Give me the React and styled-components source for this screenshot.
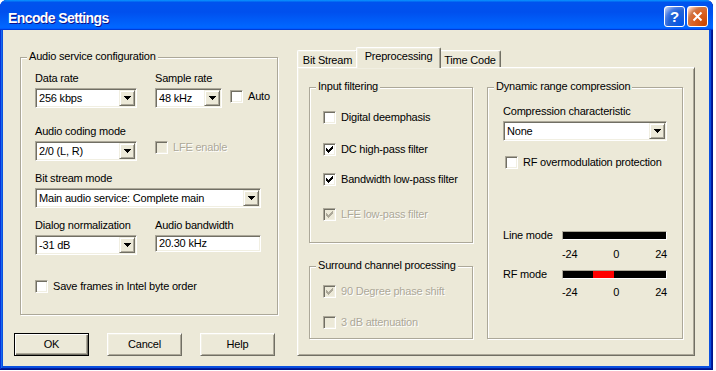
import React from "react";
import styled, { createGlobalStyle } from "styled-components";

const GlobalStyle = createGlobalStyle`
  html, body {
    margin: 0;
    padding: 0;
    background: #ffffff;
  }
  body {
    font-family: "Liberation Sans", Arial, sans-serif;
    font-size: 11px;
    letter-spacing: -0.2px;
    color: #000000;
  }
  * {
    box-sizing: border-box;
  }
`;

const Window = styled.div`
  width: 713px;
  height: 370px;
  display: flex;
  flex-direction: column;
  background: #0a50e0;
  border-radius: 7px 7px 0 0;
  overflow: hidden;
  box-shadow: inset -1px -1px #00138c, inset 1px 0 #0831d9, inset -2px -2px #001ea0, inset 2px 0 #166aee;
`;

const TitleBar = styled.div`
  height: 30px;
  flex: none;
  display: flex;
  align-items: center;
  justify-content: space-between;
  padding: 3px 5px 0 8px;
  background: linear-gradient(180deg, #0997ff 0%, #0053ee 8%, #0050ee 40%, #0066ff 88%, #0066ff 93%, #005bff 95%, #003dd7 96%, #003dd7 100%);
`;

const Title = styled.div`
  font-family: "Liberation Sans", Arial, sans-serif;
  font-weight: bold;
  font-size: 14px;
  letter-spacing: -0.6px;
  color: #ffffff;
  text-shadow: 1px 1px #0f1089;
  padding-top: 2px;
`;

const CaptionButtons = styled.div`
  display: flex;
  gap: 2px;
`;

const CaptionButton = styled.div`
  width: 21px;
  height: 21px;
  border: 1px solid #ffffff;
  border-radius: 3px;
  display: flex;
  align-items: center;
  justify-content: center;
  color: #ffffff;
  font-family: "Liberation Sans", Arial, sans-serif;
  font-weight: bold;
  font-size: 15px;
  background: ${p => p.$close
    ? "radial-gradient(circle at 90% 90%, #cc4600 0%, #dc6527 55%, #cd7546 70%, #ffccb2 90%, #ffffff 100%)"
    : "radial-gradient(circle at 90% 90%, #0054e9 0%, #2263d5 55%, #4479e4 70%, #a3bbec 90%, #ffffff 100%)"};
`;

const Client = styled.div`
  flex: 1;
  margin: 0 4px 4px 3px;
  background: #ece9d8;
  display: flex;
  align-items: flex-start;
  gap: 19px;
  padding: 17px 0 0 17px;
`;

const LeftCol = styled.div`
  display: flex;
  flex-direction: column;
  padding-top: 10px;
`;

const Group = styled.div`
  position: relative;
  width: ${p => p.$w}px;
  height: ${p => p.$h}px;
  margin-top: ${p => p.$mt || 0}px;
  border: 1px solid #aca899;
  box-shadow: inset 1px 1px #ffffff, 1px 1px #ffffff;
  padding: ${p => p.$pad};
`;

const Legend = styled.div`
  position: absolute;
  top: -8px;
  left: 6px;
  padding: 0 2px;
  background: #ece9d8;
  line-height: 13px;
  white-space: nowrap;
`;

const Row = styled.div`
  display: flex;
  align-items: flex-start;
  gap: 18px;
  margin-top: ${p => p.$mt || 0}px;
`;

const Field = styled.div`
  display: flex;
  flex-direction: column;
  gap: 3px;
`;

const Label = styled.div`
  line-height: 13px;
  white-space: nowrap;
`;

const Inline = styled.div`
  display: flex;
  align-items: flex-start;
  gap: 8px;
`;

const Sunken = styled.div`
  width: ${p => p.$w}px;
  height: ${p => p.$h}px;
  display: flex;
  align-items: stretch;
  background: #ffffff;
  border: 1px solid;
  border-color: #aca899 #ffffff #ffffff #aca899;
  box-shadow: inset 1px 1px #716f64, inset -1px -1px #f1efe2;
  padding: 1px;
`;

const ComboText = styled.div`
  flex: 1;
  display: flex;
  align-items: center;
  padding-left: 2px;
  line-height: 13px;
  white-space: nowrap;
  overflow: hidden;
`;

const DropButton = styled.div`
  width: 16px;
  flex: none;
  display: flex;
  align-items: center;
  justify-content: center;
  background: #ece9d8;
  border: 1px solid;
  border-color: #f1efe2 #716f64 #716f64 #f1efe2;
  box-shadow: inset 1px 1px #ffffff, inset -1px -1px #aca899;
`;

const CheckRow = styled.div`
  display: flex;
  align-items: center;
  gap: 5px;
  line-height: 13px;
  white-space: nowrap;
  margin-top: ${p => p.$mt || 0}px;
  margin-left: ${p => p.$ml || 0}px;
  color: ${p => p.$disabled ? "#aca899" : "#000000"};
  text-shadow: ${p => p.$disabled ? "1px 1px #ffffff" : "none"};
`;

const Box = styled.span`
  width: 13px;
  height: 13px;
  flex: none;
  display: flex;
  align-items: center;
  justify-content: center;
  border: 1px solid;
  border-color: #aca899 #ffffff #ffffff #aca899;
  box-shadow: inset 1px 1px #716f64, inset -1px -1px #f1efe2;
  background: ${p => p.$disabled ? "#ece9d8" : "#ffffff"};
`;

const ButtonRow = styled.div`
  display: flex;
  gap: 18px;
  margin: 18px 0 0 -6px;
`;

const Button = styled.div`
  width: 75px;
  height: 23px;
  display: flex;
  align-items: center;
  justify-content: center;
  line-height: 13px;
  background: #ece9d8;
  border: 1px solid;
  border-color: ${p => p.$default ? "#000000" : "#ffffff #716f64 #716f64 #ffffff"};
  box-shadow: ${p => p.$default
    ? "inset 1px 1px #ffffff, inset -1px -1px #716f64, inset -2px -2px #aca899"
    : "inset 1px 1px #f1efe2, inset -1px -1px #aca899"};
`;

const TabControl = styled.div`
  display: flex;
  flex-direction: column;
  width: 398px;
`;

const TabStrip = styled.div`
  display: flex;
  align-items: flex-end;
  height: 20px;
`;

const Tab = styled.div`
  position: relative;
  z-index: ${p => p.$active ? 2 : 1};
  width: ${p => p.$w}px;
  height: ${p => p.$active ? 21 : 17}px;
  margin: 0 ${p => p.$active ? -2 : 0}px ${p => p.$active ? -1 : 0}px;
  display: flex;
  justify-content: center;
  padding-top: ${p => p.$active ? 2 : 3}px;
  line-height: 13px;
  white-space: nowrap;
  background: #ece9d8;
  border-top: 1px solid #ffffff;
  border-left: 1px solid #ffffff;
  border-right: 1px solid #716f64;
  border-radius: 2px 2px 0 0;
  box-shadow: inset -1px 0 #aca899, inset 1px 1px #f1efe2;
`;

const TabPanel = styled.div`
  width: 398px;
  height: 289px;
  display: flex;
  gap: 14px;
  padding: 19px 0 0 11px;
  border: 1px solid;
  border-color: #ffffff #716f64 #716f64 #ffffff;
  box-shadow: inset 1px 1px #f1efe2, inset -1px -1px #aca899;
`;

const PanelCol = styled.div`
  display: flex;
  flex-direction: column;
`;

const MeterRow = styled.div`
  display: flex;
  align-items: center;
  line-height: 13px;
  margin-top: ${p => p.$mt}px;
`;

const MeterLabel = styled.div`
  width: 59px;
  white-space: nowrap;
`;

const Bar = styled.div`
  position: relative;
  width: 105px;
  height: 9px;
  background: #000000;
  border: 1px solid;
  border-color: #aca899 #ffffff #ffffff #aca899;
`;

const BarFill = styled.div`
  position: absolute;
  top: 0;
  bottom: 0;
  background: #ff0000;
`;

const Scale = styled.div`
  width: 105px;
  margin: ${p => p.$mt}px 0 0 59px;
  display: flex;
  justify-content: space-between;
  line-height: 13px;
`;

function Arrow() {
  return (
    <svg width="7" height="4" viewBox="0 0 7 4" shapeRendering="crispEdges">
      <path d="M0 0h7v1H0z M1 1h5v1H1z M2 2h3v1H2z M3 3h1v1H3z" fill="#000" />
    </svg>
  );
}

function CheckMark({ color }) {
  return (
    <svg width="7" height="7" viewBox="0 0 7 7" shapeRendering="crispEdges">
      <path
        d="M6 0h1v1H6z M5 1h2v1H5z M0 2h1v1H0z M4 2h3v1H4z M0 3h2v1H0z M3 3h3v1H3z M0 4h5v1H0z M1 5h3v1H1z M2 6h1v1H2z"
        fill={color}
      />
    </svg>
  );
}

function Combo({ w, value }) {
  return (
    <Sunken $w={w} $h={20}>
      <ComboText>{value}</ComboText>
      <DropButton><Arrow /></DropButton>
    </Sunken>
  );
}

function Check({ label, checked, disabled, mt, ml }) {
  return (
    <CheckRow $mt={mt} $ml={ml} $disabled={disabled}>
      <Box $disabled={disabled}>
        {checked && <CheckMark color={disabled ? "#aca899" : "#000"} />}
      </Box>
      {label}
    </CheckRow>
  );
}

// dB range shown on the meters
const MIN_DB = -24;
const MAX_DB = 24;
const BAR_INNER = 103;

function Meter({ label, mt, from, to }) {
  const left = ((from - MIN_DB) / (MAX_DB - MIN_DB)) * BAR_INNER;
  const right = ((to - MIN_DB) / (MAX_DB - MIN_DB)) * BAR_INNER;
  return (
    <MeterRow $mt={mt}>
      <MeterLabel>{label}</MeterLabel>
      <Bar>
        {from !== undefined && <BarFill style={{ left, width: right - left }} />}
      </Bar>
    </MeterRow>
  );
}

export default function App() {
  return (
    <>
      <GlobalStyle />
      <Window>
        <TitleBar>
          <Title>Encode Settings</Title>
          <CaptionButtons>
            <CaptionButton>?</CaptionButton>
            <CaptionButton $close>
              <svg width="11" height="11" viewBox="0 0 11 11">
                <path d="M1.5 1.5L9.5 9.5M9.5 1.5L1.5 9.5" stroke="#fff" strokeWidth="2" />
              </svg>
            </CaptionButton>
          </CaptionButtons>
        </TitleBar>

        <Client>
          <LeftCol>
            <Group $w={258} $h={258} $pad="14px 0 0 14px">
              <Legend>Audio service configuration</Legend>
              <Row>
                <Field>
                  <Label>Data rate</Label>
                  <Combo w={102} value="256 kbps" />
                </Field>
                <Field>
                  <Label>Sample rate</Label>
                  <Inline>
                    <Combo w={67} value="48 kHz" />
                    <Check label="Auto" mt={2} />
                  </Inline>
                </Field>
              </Row>
              <Row $mt={17}>
                <Field>
                  <Label>Audio coding mode</Label>
                  <Combo w={102} value="2/0 (L, R)" />
                </Field>
                <Check label="LFE enable" disabled mt={16} />
              </Row>
              <Row $mt={11}>
                <Field>
                  <Label>Bit stream mode</Label>
                  <Combo w={226} value="Main audio service: Complete main" />
                </Field>
              </Row>
              <Row $mt={11}>
                <Field>
                  <Label>Dialog normalization</Label>
                  <Combo w={102} value="-31 dB" />
                </Field>
                <Field>
                  <Label>Audio bandwidth</Label>
                  <Sunken $w={106} $h={17}>
                    <ComboText>20.30 kHz</ComboText>
                  </Sunken>
                </Field>
              </Row>
              <Check label="Save frames in Intel byte order" mt={25} />
            </Group>

            <ButtonRow>
              <Button $default>OK</Button>
              <Button>Cancel</Button>
              <Button>Help</Button>
            </ButtonRow>
          </LeftCol>

          <TabControl>
            <TabStrip>
              <Tab $w={61}>Bit Stream</Tab>
              <Tab $w={85} $active>Preprocessing</Tab>
              <Tab $w={62}>Time Code</Tab>
            </TabStrip>
            <TabPanel>
              <PanelCol>
                <Group $w={164} $h={156} $pad="23px 0 0 13px">
                  <Legend>Input filtering</Legend>
                  <Check label="Digital deemphasis" />
                  <Check label="DC high-pass filter" checked mt={19} />
                  <Check label="Bandwidth low-pass filter" checked mt={17} />
                  <Check label="LFE low-pass filter" checked disabled mt={22} />
                </Group>
                <Group $w={164} $h={73} $mt={23} $pad="18px 0 0 13px">
                  <Legend>Surround channel processing</Legend>
                  <Check label="90 Degree phase shift" checked disabled />
                  <Check label="3 dB attenuation" disabled mt={18} />
                </Group>
              </PanelCol>

              <Group $w={196} $h={252} $pad="17px 0 0 15px">
                <Legend>Dynamic range compression</Legend>
                <Field>
                  <Label>Compression characteristic</Label>
                  <Combo w={164} value="None" />
                </Field>
                <Check label="RF overmodulation protection" mt={15} ml={2} />
                <Meter label="Line mode" mt={60} />
                <Scale $mt={6}><span>-24</span><span>0</span><span>24</span></Scale>
                <Meter label="RF mode" mt={7} from={-10} to={0} />
                <Scale $mt={5}><span>-24</span><span>0</span><span>24</span></Scale>
              </Group>
            </TabPanel>
          </TabControl>
        </Client>
      </Window>
    </>
  );
}
